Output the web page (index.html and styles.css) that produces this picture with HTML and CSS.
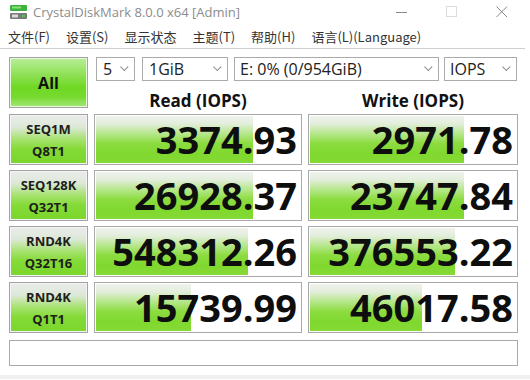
FILE: index.html
```html
<!DOCTYPE html>
<html lang="zh-CN">
<head>
  <meta charset="UTF-8">
  <title>CrystalDiskMark 8.0.0 x64 [Admin]</title>
  <link rel="stylesheet" href="styles.css">
</head>
<body>
  <div class="titlebar">
    <svg class="app-icon" width="17" height="16" viewBox="0 0 17 16">
      <rect x="0" y="1" width="17" height="6" rx="1" fill="#3cb43c"/>
      <rect x="2" y="2.5" width="9" height="2" fill="#8fe07a"/>
      <rect x="0" y="9" width="17" height="6" rx="1" fill="#7a7a7a"/>
      <rect x="2" y="10.5" width="6" height="3" fill="#d8d8d8"/>
      <rect x="12" y="11" width="3" height="2" fill="#4ccc4c"/>
    </svg>
    <span class="title-text">CrystalDiskMark 8.0.0 x64 [Admin]</span>
    <div class="win-controls">
      <svg width="12" height="12" viewBox="0 0 12 12"><line x1="0" y1="6.5" x2="11" y2="6.5" stroke="#8a8a8a" stroke-width="1"/></svg>
      <svg width="12" height="12" viewBox="0 0 12 12"><rect x="0.5" y="0.5" width="10" height="10" fill="none" stroke="#dcdcdc" stroke-width="1"/></svg>
      <svg width="12" height="12" viewBox="0 0 12 12"><path d="M0.5 0.5 L11 11 M11 0.5 L0.5 11" stroke="#8a8a8a" stroke-width="1"/></svg>
    </div>
  </div>

  <div class="menubar">
    <span>文件(F)</span>
    <span>设置(S)</span>
    <span>显示状态</span>
    <span>主题(T)</span>
    <span>帮助(H)</span>
    <span>语言(L)(Language)</span>
  </div>

  <div class="main">
    <div class="grid">
      <div class="btn-all">All</div>

      <div class="top-right">
        <div class="combos">
          <div class="combo combo-count">5 <i class="chev"></i></div>
          <div class="combo combo-size">1GiB <i class="chev"></i></div>
          <div class="combo combo-drive">E: 0% (0/954GiB) <i class="chev"></i></div>
          <div class="combo combo-unit">IOPS <i class="chev"></i></div>
        </div>
        <div class="headers">
          <div class="col-head">Read (IOPS)</div>
          <div class="col-head">Write (IOPS)</div>
        </div>
      </div>

      <div class="label">SEQ1M<br>Q8T1</div>
      <div class="cell" style="background-size: 158px 100%;">3374.93</div>
      <div class="cell" style="background-size: 155px 100%;">2971.78</div>

      <div class="label">SEQ128K<br>Q32T1</div>
      <div class="cell" style="background-size: 158px 100%;">26928.37</div>
      <div class="cell" style="background-size: 155px 100%;">23747.84</div>

      <div class="label">RND4K<br>Q32T16</div>
      <div class="cell" style="background-size: 153px 100%;">548312.26</div>
      <div class="cell" style="background-size: 146px 100%;">376553.22</div>

      <div class="label">RND4K<br>Q1T1</div>
      <div class="cell" style="background-size: 96px 100%;">15739.99</div>
      <div class="cell" style="background-size: 113px 100%;">46017.58</div>
    </div>

    <div class="statusbar"></div>
  </div>

  <div class="bottom-strip"></div>
</body>
</html>
```

FILE: styles.css
```css
body {
  margin: 0;
  width: 530px;
  height: 380px;
  overflow: hidden;
  background: #fff;
  font-family: "Open Sans", "Noto Sans CJK SC", sans-serif;
  color: #1a1a1a;
}

.titlebar {
  height: 24px;
  display: flex;
  align-items: center;
  padding-left: 10px;
}

.app-icon {
  margin-right: 6px;
}

.title-text {
  font-size: 13px;
  color: #8c8c8c;
}

.win-controls {
  margin-left: auto;
  display: flex;
  gap: 38px;
  padding-right: 22px;
}

.menubar {
  height: 24px;
  margin-right: 5px;
  display: flex;
  align-items: center;
  gap: 16px;
  padding-left: 8px;
  font-family: "Noto Sans CJK SC", "Open Sans", sans-serif;
  font-size: 13px;
  color: #333;
  border-bottom: 1px solid #cfcfcf;
}

.main {
  padding: 8px 0 0 9px;
}

.grid {
  display: grid;
  grid-template-columns: 79px 208px 210px;
  grid-template-rows: 52px repeat(4, 51px);
  column-gap: 6px;
  row-gap: 5px;
}

.btn-all {
  border: 1px solid #a3a3a3;
  box-shadow: inset 0 0 0 1px #e8f8dc;
  background: linear-gradient(to bottom, #b9ee9a 0%, #94e25e 30%, #6fd824 60%, #78da30 80%, #a4e87a 100%);
  display: flex;
  align-items: center;
  justify-content: center;
  font-size: 16px;
  font-weight: 700;
  color: #111;
  height: 49px;
}

.top-right {
  grid-column: 2 / 4;
  display: flex;
  flex-direction: column;
}

.combos {
  display: flex;
  height: 24px;
  padding-left: 2px;
}

.combo {
  border: 1px solid #ababab;
  background: #fff;
  display: flex;
  align-items: center;
  padding-left: 6px;
  font-size: 16px;
  color: #222;
  box-sizing: border-box;
  height: 24px;
}

.combo-count { width: 39px; margin-right: 7px; }
.combo-size { width: 86px; margin-right: 6px; }
.combo-drive { width: 205px; margin-right: 5px; padding-left: 5px; }
.combo-unit { width: 73px; padding-left: 5px; }

.chev {
  margin-left: auto;
  margin-right: 6px;
  width: 5px;
  height: 5px;
  border-right: 1px solid #888;
  border-bottom: 1px solid #888;
  transform: rotate(45deg) translate(-2px, -1px);
}

.headers {
  display: grid;
  grid-template-columns: 208px 210px;
  column-gap: 6px;
  flex: 1;
  align-items: end;
}

.col-head {
  text-align: center;
  font-size: 17px;
  font-weight: 700;
  color: #111;
  line-height: 17px;
  padding-bottom: 0;
}

.label {
  border: 1px solid #a3a3a3;
  box-shadow: inset 0 0 0 1px #f4f4f4;
  background: linear-gradient(to bottom, #ececec 0%, #dce8d6 25%, #a6e26e 50%, #84da36 70%, #7ad62c 100%);
  display: flex;
  align-items: center;
  justify-content: center;
  text-align: center;
  font-size: 13px;
  font-weight: 700;
  line-height: 22px;
  color: #1e1e1e;
}

.cell {
  border: 1px solid #a9a9a9;
  box-shadow: inset 0 0 0 1px #fff;
  background-color: #fff;
  background-image: linear-gradient(to bottom, #f2f3f1 0%, #e2eedb 18%, #b2e684 40%, #8cdc40 58%, #80d82e 80%, #86da36 100%);
  background-repeat: no-repeat;
  text-align: right;
  padding-right: 4px;
  font-size: 38px;
  font-weight: 700;
  line-height: 49px;
  color: #0e0e0e;
}

.statusbar {
  margin-top: 7px;
  width: 509px;
  height: 26px;
  box-sizing: border-box;
  border: 1px solid #a9a9a9;
  background: #fff;
}

.bottom-strip {
  margin-top: 9px;
  height: 4px;
  background: #f0f0f0;
}
```
